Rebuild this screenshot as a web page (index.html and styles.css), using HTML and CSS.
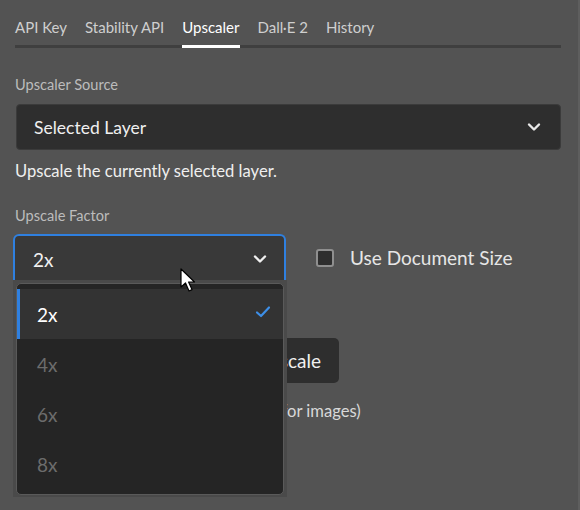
FILE: index.html
```html
<!DOCTYPE html>
<html>
<head>
<meta charset="utf-8">
<link rel="stylesheet" href="styles.css">
</head>
<body>
<div class="panel">
  <nav class="tabs">
    <span class="tab">API Key</span>
    <span class="tab">Stability API</span>
    <span class="tab active">Upscaler</span>
    <span class="tab">Dall·E 2</span>
    <span class="tab">History</span>
  </nav>

  <div class="label first">Upscaler Source</div>
  <div class="select source">
    <span>Selected Layer</span>
    <svg class="chev" width="14" height="10" viewBox="0 0 14 10"><path d="M2 2.5 L7 7.5 L12 2.5" fill="none" stroke="#e8e8e8" stroke-width="2.4" stroke-linecap="round" stroke-linejoin="round"/></svg>
  </div>
  <div class="help">Upscale the currently selected layer.</div>

  <div class="label">Upscale Factor</div>
  <div class="factor-row">
    <div class="factor-wrap">
      <div class="select factor">
        <span>2x</span>
        <svg class="chev" width="14" height="10" viewBox="0 0 14 10"><path d="M2 2.5 L7 7.5 L12 2.5" fill="none" stroke="#f0f0f0" stroke-width="2.4" stroke-linecap="round" stroke-linejoin="round"/></svg>
      </div>
      <div class="popover">
        <div class="menu">
          <div class="item selected"><span>2x</span>
            <svg width="16" height="14" viewBox="0 0 16 14"><path d="M2 7.5 L6 11 L14 2.5" fill="none" stroke="#3d8fe8" stroke-width="2.2" stroke-linecap="round" stroke-linejoin="round"/></svg>
          </div>
          <div class="item">4x</div>
          <div class="item">6x</div>
          <div class="item">8x</div>
        </div>
      </div>
      <svg class="cursor" width="18" height="26" viewBox="0 0 18 26"><path d="M1 1 L1 19 L5.5 15 L9 23 L12 21.6 L8.6 14 L14.5 14 Z" fill="#ffffff" stroke="#000000" stroke-width="1.2" stroke-linejoin="round"/></svg>
    </div>
    <label class="check"><span class="box"></span>Use Document Size</label>
  </div>

  <div class="actions">
    <button class="btn">Upscale</button>
  </div>
  <div class="note">(Runs the Stability API ESRGAN tool for images)</div>
</div>
</body>
</html>
```
FILE: styles.css
```css
html, body {
  margin: 0;
  padding: 0;
  background: #535353;
  width: 580px;
  height: 510px;
  overflow: hidden;
}
body {
  font-family: Lato, "Open Sans", sans-serif;
  color: #e3e3e3;
}
.panel {
  padding: 13px 17px 0 15px;
  border-right: 2px solid #5e5e5e;
  height: 497px;
  width: 546px;
  position: relative;
}
.tabs {
  display: flex;
  gap: 18px;
  border-bottom: 3px solid #3f3f3f;
  font-size: 15px;
  height: 35px;
  box-sizing: border-box;
}
.tab {
  color: #cfcfcf;
  line-height: 28px;
  height: 32px;
  box-sizing: border-box;
}
.tab.active {
  color: #ffffff;
  border-bottom: 3px solid #ffffff;
  height: 35px;
}
.label {
  font-size: 14.6px;
  color: #bcbcbc;
  margin-top: 25px;
  line-height: 20px;
}
.label.first {
  margin-top: 27px;
}
.select {
  display: flex;
  align-items: center;
  justify-content: space-between;
  box-sizing: border-box;
  background: #2e2e2e;
  border: 1px solid #3b3b3b;
  border-radius: 4px;
  font-size: 17.5px;
  color: #f0f0f0;
}
.source {
  margin-top: 9px;
  margin-left: 1px;
  height: 46px;
  padding: 0 19px 0 17px;
}
.chev { display: block; }
.help {
  font-size: 16.6px;
  color: #efefef;
  margin-top: 11px;
  line-height: 20px;
}
.factor-row {
  display: flex;
  align-items: flex-start;
  margin-top: 8px;
  margin-left: -2px;
}
.factor-wrap {
  position: relative;
  width: 273px;
}
.factor {
  height: 48px;
  background: #393939;
  border: 2px solid #2f80e0;
  border-bottom: none;
  border-radius: 6px 6px 0 0;
  padding: 0 17px 0 18px;
  font-size: 19px;
}
.popover {
  position: absolute;
  left: 0;
  top: 46px;
  width: 274px;
  height: 217px;
  box-sizing: border-box;
  background: #4a4a4a;
  padding: 3px 3px 2px 3px;
  z-index: 2;
}
.menu {
  height: 100%;
  box-sizing: border-box;
  background: #252525;
  border: 1px solid #5a5a5a;
  border-radius: 5px;
  padding-top: 5px;
}
.item {
  height: 50px;
  display: flex;
  align-items: center;
  justify-content: space-between;
  padding: 0 12px 0 20px;
  font-size: 19px;
  color: #6c6c6c;
}
.item.selected {
  background: #333333;
  color: #ffffff;
  border-left: 3px solid #2f80e0;
  padding-left: 17px;
}
.item.selected svg { margin-top: -4px; }
.cursor {
  position: absolute;
  left: 167px;
  top: 34px;
  z-index: 3;
}
.check {
  display: flex;
  align-items: center;
  gap: 16px;
  margin-left: 30px;
  margin-top: 12px;
  font-size: 19px;
  color: #e6e6e6;
}
.box {
  width: 18px;
  height: 18px;
  box-sizing: border-box;
  border: 2px solid #8f8f8f;
  border-radius: 3px;
  background: #2e2e2e;
}
.actions {
  display: flex;
  justify-content: flex-end;
  width: 324px;
  margin-top: 56px;
}
.btn {
  font-family: inherit;
  font-size: 19px;
  color: #f0f0f0;
  background: #2e2e2e;
  border: none;
  border-radius: 5px;
  height: 45px;
  padding: 0 18px;
}
.note {
  font-size: 16.6px;
  color: #d8d8d8;
  margin-top: 18px;
  line-height: 20px;
}
```
